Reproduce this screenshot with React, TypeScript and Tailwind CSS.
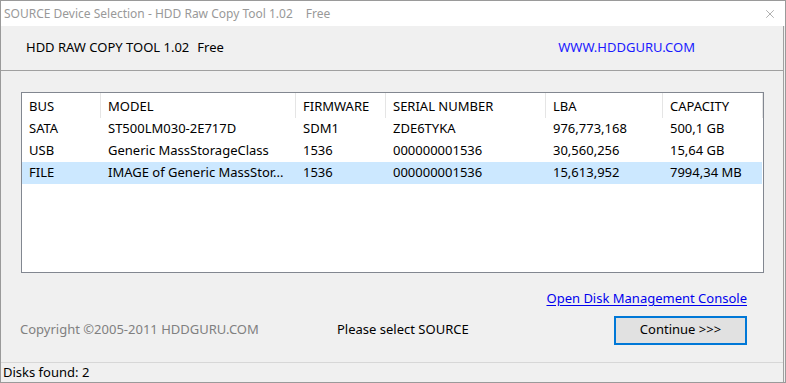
import { X } from "lucide-react";

const cols = [
    { label: "BUS", w: "w-[79px]" },
    { label: "MODEL", w: "w-[195px]" },
    { label: "FIRMWARE", w: "w-[90px]" },
    { label: "SERIAL NUMBER", w: "w-[160px]" },
    { label: "LBA", w: "w-[117px]" },
    { label: "CAPACITY", w: "w-[100px]" },
];

const disks = [
    ["SATA", "ST500LM030-2E717D", "SDM1", "ZDE6TYKA", "976,773,168", "500,1 GB"],
    ["USB", "Generic MassStorageClass", "1536", "000000001536", "30,560,256", "15,64 GB"],
    ["FILE", "IMAGE of Generic MassStor...", "1536", "000000001536", "15,613,952", "7994,34 MB"],
];

export default function App() {
    const selected = 2;

    return (
        <div
            className="w-[786px] h-[383px] bg-[#f0f0f0] border border-[#9a9a9a] flex flex-col text-[13px] text-black overflow-hidden"
            style={{ fontFamily: '"Noto Sans", "Segoe UI", sans-serif' }}>
            {/* title bar */}
            <div className="h-[25px] shrink-0 bg-white flex items-center pl-[3px] pr-[8px] text-[12px] text-[#999999]">
                <span>SOURCE Device Selection - HDD Raw Copy Tool 1.02</span>
                <span className="ml-[13px]">Free</span>
                <X className="ml-auto text-[#777777]" size={14} strokeWidth={1} />
            </div>

            <div className="flex-1 flex flex-col border-r border-[#a0a0a0] mr-[1px]">
                {/* header */}
                <div className="h-[45px] shrink-0 flex items-center border-b border-[#a0a0a0]">
                    <span className="pl-[25px]">HDD RAW COPY TOOL 1.02</span>
                    <span className="ml-[8px]">Free</span>
                    <span className="ml-auto mr-[88px] text-[#1a1aff]">WWW.HDDGURU.COM</span>
                </div>

                {/* disk list */}
                <div className="mt-[21px] ml-[20px] w-[743px] h-[181px] bg-white border border-[#828790]">
                    <div className="flex h-[25px]">
                        {cols.map((c) => (
                            <div key={c.label} className={`${c.w} shrink-0 flex items-center justify-between`}>
                                <span className="pl-[7px] pt-[2px]">{c.label}</span>
                                <span className="w-px h-full bg-[#e5e5e5]" />
                            </div>
                        ))}
                    </div>
                    {disks.map((row, i) => (
                        <div
                            key={i}
                            className={`flex h-[22px] w-[740px] items-center ${i === selected ? "bg-[#cce8ff]" : ""}`}>
                            {row.map((cell, j) => (
                                <span key={j} className={`${cols[j].w} shrink-0 pl-[7px] whitespace-nowrap`}>
                                    {cell}
                                </span>
                            ))}
                        </div>
                    ))}
                </div>

                {/* bottom area */}
                <div className="flex justify-end pr-[36px] mt-[16px]">
                    <span className="text-[#0000ee] underline underline-offset-2">Open Disk Management Console</span>
                </div>
                <div className="flex items-center mt-[7px]">
                    <span className="pl-[19px] w-[336px] text-[#808080]">Copyright ©2005-2011 HDDGURU.COM</span>
                    <span className="w-[277px]">Please select SOURCE</span>
                    <button className="w-[133px] h-[29px] bg-[#e1e1e1] border-2 border-[#0078d7] flex items-center justify-center">
                        Continue &gt;&gt;&gt;
                    </button>
                </div>

                {/* status bar */}
                <div className="mt-auto h-[20px] border-t border-[#d7d7d7] flex items-center pl-[2px]">
                    Disks found: 2
                </div>
            </div>
        </div>
    );
}
